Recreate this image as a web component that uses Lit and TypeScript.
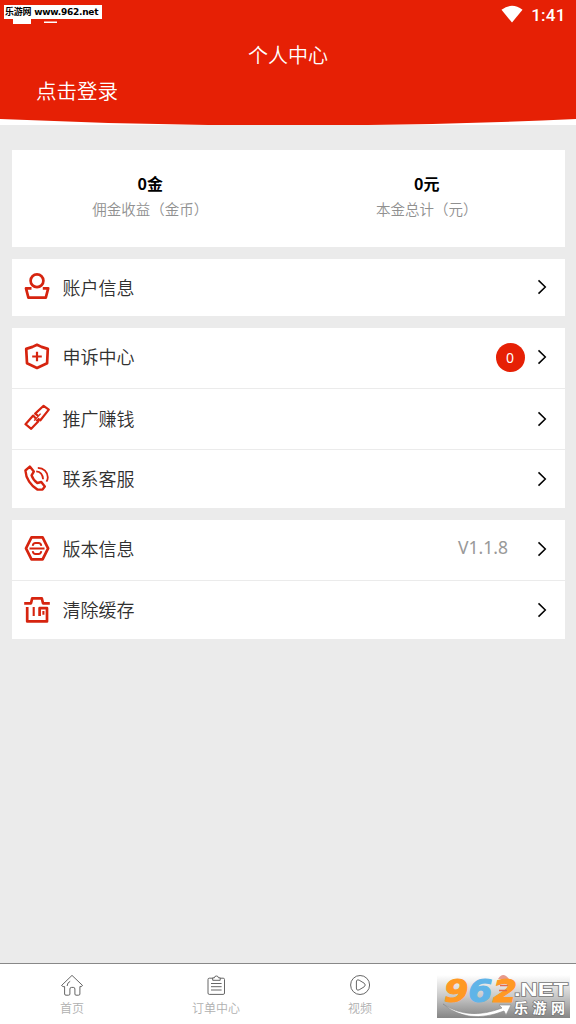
import { LitElement, html, svg, css, nothing } from 'lit';
import type { SVGTemplateResult } from 'lit';
import { customElement, property } from 'lit/decorators.js';

const icons: Record<string, SVGTemplateResult> = {
  user: svg`
    <circle cx="13" cy="7.8" r="6.4" />
    <path d="M7.5 15.4H2L4.4 24.6H21.8L24.2 15.4H18.8" />
  `,
  shield: svg`
    <path d="M13 1.8L17.5 3.9 23.8 5.9 23.1 20.3 13 25 3 20.3 2.2 5.9 8.5 3.9Z" />
    <path d="M13 8.7v9.6M8.2 13.5h9.6" stroke-width="2.2" />
  `,
  link: svg`
    <path d="M14.2 11.8L11.2 9.6 19.6 1.8 24.8 5.6 16.4 16.3 13.6 14.6M11.8 14.4L9.2 11.6 1.5 20.2 7.2 24.8 14.2 17.6 12.2 15.8" stroke-width="2.2" />
    <path d="M10.2 16.6L16.6 9.6" stroke-width="1.4" />
  `,
  phone: svg`
    <path d="M5.8 1.6L9.8 6.6 7.6 10.4C8.6 13.5 10.3 15.8 13.3 18L17.3 17 20.8 21.5 18.5 24.6H13.5C7 21 1.8 13.5 1.4 5.5Z" stroke-width="2.4" />
    <path d="M12.2 6.3C16.2 6.6 18.8 9.4 19.1 14.3M13.8 2.8C19.8 3 23.6 7 23.8 12.2Q23.8 14.4 22.5 16.6" stroke-width="1.8" />
  `,
  version: svg`
    <path d="M7.5 2.3H18.6L24.1 13.3 18.6 24.3H7.5L2 13.3Z" />
    <path d="M5.5 13.5H20.5M8.7 10.8Q9 8 11.5 8H14.5Q17 8 17.3 10.8M8.7 16.2Q9 19 11.5 19H14.5Q17 19 17.3 16.2" stroke-width="1.8" />
  `,
  trash: svg`
    <path d="M.2 7.3H7L8.2 2.3H17.8L19 7.3H25.8" />
    <path d="M3.2 11V25.4H23V12.2H15.6V20" />
    <path d="M9.7 11V20M19.4 15V18.8" stroke-width="2.1" />
  `,
  home: svg`
    <path d="M.5 11.5L11 1.4 21.6 11.5 20.1 12.6H18.9V20Q18.9 21.2 17.6 21.2H15Q13.9 21.2 13.9 20V15Q13.9 13.4 12.3 13.4H10.6Q8.9 13.4 8.9 15V20Q8.9 21.2 7.6 21.2H5Q3.6 21.2 3.6 20V12.6H2.1Z" />
    <path d="M6.1 12Q6.2 8.6 9.2 7.3" />
  `,
  orders: svg`
    <path d="M7.7 4.2H4.3Q3 4.2 3 5.5V19Q3 20.4 4.3 20.4H18.2Q19.5 20.4 19.5 19V5.5Q19.5 4.2 18.2 4.2H15.2" />
    <path d="M7.7 6.3V3.8H9.4Q9.5 2 11.4 2T13.5 3.8H15.2V6.3ZM6 9.5H16.6M6 12.7H16.6M6 16H16.6" />
  `,
  video: svg`
    <circle cx="11.1" cy="11" r="9.5" />
    <path d="M7.4 8Q7.4 5 10.2 6.2L15.2 9.2Q17.4 11 15.2 12.8L10.2 15.8Q7.4 17 7.4 14Z" />
  `,
};

interface Row {
  icon: string;
  label: string;
  badge?: string;
  value?: string;
}

@customElement('menu-row')
export class MenuRow extends LitElement {
  @property({ type: Object }) row!: Row;

  static styles = css`
    :host {
      display: flex;
      align-items: center;
      box-sizing: border-box;
      padding: 0 18px 0 12px;
      height: 58px;
      color: #303030;
    }

    .icon {
      width: 26px;
      height: 27px;
      flex: none;
      margin: 0 12.5px 2px 0;
      fill: none;
      stroke: #d6240f;
      stroke-width: 2.7;
      stroke-linejoin: round;
    }

    .label {
      flex: 1;
      font-size: 18px;
      line-height: 26px;
      margin-bottom: 1.5px;
    }

    .value {
      font-family: 'Noto Sans', 'Noto Sans CJK SC', sans-serif;
      font-size: 17.5px;
      font-weight: 400;
      line-height: 24px;
      color: #999;
      margin: 0 29px 5px 0;
    }

    .badge {
      width: 29px;
      height: 29px;
      border-radius: 50%;
      background: #e62005;
      color: #fff;
      font-family: 'Noto Sans', sans-serif;
      font-size: 14px;
      font-weight: 400;
      line-height: 29px;
      text-align: center;
      margin-right: 12.5px;
    }

    .arrow {
      width: 10px;
      height: 16px;
      flex: none;
      fill: none;
      stroke: #000;
      stroke-width: 1.5;
    }
  `;

  render() {
    const { icon, label, badge, value } = this.row;

    return html`
      <svg class="icon" viewBox="0 0 26 27">${icons[icon]}</svg>
      <span class="label">${label}</span>
      ${value ? html`<span class="value">${value}</span>` : nothing}
      ${badge ? html`<span class="badge">${badge}</span>` : nothing}
      <svg class="arrow" viewBox="0 0 10 16"><path d="M1.5 1.4L8.3 8 1.5 14.6" /></svg>
    `;
  }
}

@customElement('app-root')
export class AppRoot extends LitElement {
  private stats = [
    { amount: '0金', label: '佣金收益（金币）' },
    { amount: '0元', label: '本金总计（元）' },
  ];

  private groups: Row[][] = [
    [{ icon: 'user', label: '账户信息' }],
    [
      { icon: 'shield', label: '申诉中心', badge: '0' },
      { icon: 'link', label: '推广赚钱' },
      { icon: 'phone', label: '联系客服' },
    ],
    [
      { icon: 'version', label: '版本信息', value: 'V1.1.8' },
      { icon: 'trash', label: '清除缓存' },
    ],
  ];

  private tabs = [
    { icon: 'home', label: '首页' },
    { icon: 'orders', label: '订单中心' },
    { icon: 'video', label: '视频' },
  ];

  static styles = css`
    :host {
      display: flex;
      flex-direction: column;
      position: relative;
      width: 576px;
      height: 1024px;
      overflow: hidden;
      background: #ebebeb;
      font-family: 'Noto Sans CJK SC', sans-serif;
      font-weight: 350;
    }

    header {
      height: 119px;
      flex: none;
      background: #e62005;
      color: #fff;
    }

    .status {
      display: flex;
      justify-content: flex-end;
      align-items: center;
      height: 30px;
      padding-right: 10.5px;
      gap: 8.5px;
      font: 500 17px/30px Roboto, sans-serif;
      letter-spacing: 0.2px;
    }

    .wifi {
      width: 22px;
      height: 18px;
      fill: #fff;
      margin-bottom: 2px;
    }

    h1 {
      margin: 10px 0 0;
      font-size: 20px;
      font-weight: inherit;
      line-height: 30px;
      text-align: center;
    }

    .login {
      margin-left: 36px;
      font-size: 20.5px;
      line-height: 30px;
      padding-top: 5px;
    }

    .curve {
      display: block;
      width: 576px;
      height: 6px;
      flex: none;
      background: #fff;
      fill: #e62005;
    }

    main {
      flex: 1;
      display: flex;
      flex-direction: column;
      gap: 12px;
      padding: 24.5px 11px 0 12px;
    }

    .card {
      background: #fff;
    }

    .stats {
      display: grid;
      grid-template-columns: 1fr 1fr;
      height: 97px;
      box-sizing: border-box;
      padding-top: 21.5px;
      text-align: center;
    }

    .amount {
      font-size: 16px;
      font-weight: 700;
      line-height: 25px;
      color: #000;
    }

    .stat-label {
      font-size: 14.5px;
      line-height: 25px;
      color: #909090;
    }

    menu-row:only-child {
      height: 57.5px;
    }

    menu-row:not(:last-child) {
      height: 61px;
      padding-bottom: 2px;
      border-bottom: 1px solid #ebebeb;
    }

    menu-row + menu-row:not(:last-child) {
      padding-bottom: 1px;
    }

    nav {
      display: grid;
      grid-template-columns: repeat(4, 1fr);
      height: 61px;
      box-sizing: border-box;
      flex: none;
      border-top: 1px solid #888;
      background: #fff;
    }

    .tab {
      display: flex;
      flex-direction: column;
      align-items: center;
      padding-top: 10px;
      font-size: 12px;
      line-height: 18px;
      color: #b0b0b0;
    }

    .tab svg {
      width: 23px;
      height: 23px;
      margin-bottom: 2px;
      fill: none;
      stroke: #555;
      stroke-width: 0.9;
      stroke-linejoin: round;
    }

    .site-tag {
      position: absolute;
      left: 4px;
      top: 5px;
      width: 98px;
      height: 14px;
      box-sizing: border-box;
      padding-left: 1px;
      background: #fff;
      color: #000;
      font: 700 9px/14px 'DejaVu Sans', 'Noto Sans CJK SC', sans-serif;
      letter-spacing: -0.25px;
      white-space: nowrap;
    }

    .notices {
      position: absolute;
      left: 13px;
      top: 19px;
      width: 44px;
      height: 5px;
      fill: #fff;
    }

    .watermark {
      position: absolute;
      left: 437px;
      top: 965px;
      width: 139px;
      height: 53px;
    }
  `;

  render() {
    return html`
      <header>
        <div class="status">
          <svg class="wifi" viewBox="0 0 22 18"><path d="M.5 4.8Q11-3.2 21.5 4.8L11 17.6Z" /></svg>
          <span>1:41</span>
        </div>
        <h1>个人中心</h1>
        <div class="login">点击登录</div>
      </header>
      <svg class="curve" viewBox="0 0 576 6"><path d="M0 0Q288 13 576 0Z" /></svg>

      <main>
        <section class="card stats">
          ${this.stats.map(stat => html`
            <div>
              <div class="amount">${stat.amount}</div>
              <div class="stat-label">${stat.label}</div>
            </div>
          `)}
        </section>
        ${this.groups.map(rows => html`
          <section class="card">
            ${rows.map(row => html`<menu-row .row=${row}></menu-row>`)}
          </section>
        `)}
      </main>

      <nav>
        ${this.tabs.map(tab => html`
          <div class="tab">
            <svg viewBox="0 0 23 23">${icons[tab.icon]}</svg>
            <span>${tab.label}</span>
          </div>
        `)}
      </nav>

      <svg class="notices" viewBox="0 0 44 5"><path d="M0 0H18V5H0ZM31 2.5H44V4H31Z" /></svg>
      <div class="site-tag">乐游网 www.962.net</div>
      ${this.renderWatermark()}
    `;
  }

  private renderWatermark() {
    return html`
      <svg class="watermark" viewBox="0 0 139 53">
        <defs>
          <linearGradient id="shade" x1="0" y1="0" x2="0" y2="1">
            <stop offset="0" stop-color="#fff" />
            <stop offset=".5" stop-color="#c8c8c8" />
            <stop offset="1" stop-color="#858585" />
          </linearGradient>
        </defs>
        <rect y="10" width="133" height="43" fill="url(#shade)" />
        <path d="M61 14Q66 6 72 14" fill="#e79a8c" />
        <text x="7" y="37" font-family="'DejaVu Sans', sans-serif" font-weight="700" font-style="italic" font-size="32"
          textLength="73" lengthAdjust="spacingAndGlyphs" stroke="#ff9924" stroke-width="1"
          fill="#ff9924">9<tspan fill="#5fb4e8" stroke="#5fb4e8">6</tspan>2</text>
        <path d="M63 20.5H71M62 25.5H70" stroke="#e46a4c" stroke-width="1.6" />
        <path d="M6 39Q31 56 65 43L62 40 74 40 69 50 67 46Q31 60 6 39Z" fill="#fff" stroke="#888" stroke-width=".6" />
        <g fill="#fff" stroke="#777" stroke-width="1.4" paint-order="stroke">
          <text x="77" y="31" font-family="'Liberation Sans', sans-serif" font-weight="700" font-size="18"
            textLength="54" lengthAdjust="spacingAndGlyphs">.NET</text>
          <text x="77" y="48" font-family="'Noto Sans CJK SC', sans-serif" font-weight="700" font-size="14"
            textLength="51">乐游网</text>
        </g>
      </svg>
    `;
  }
}
